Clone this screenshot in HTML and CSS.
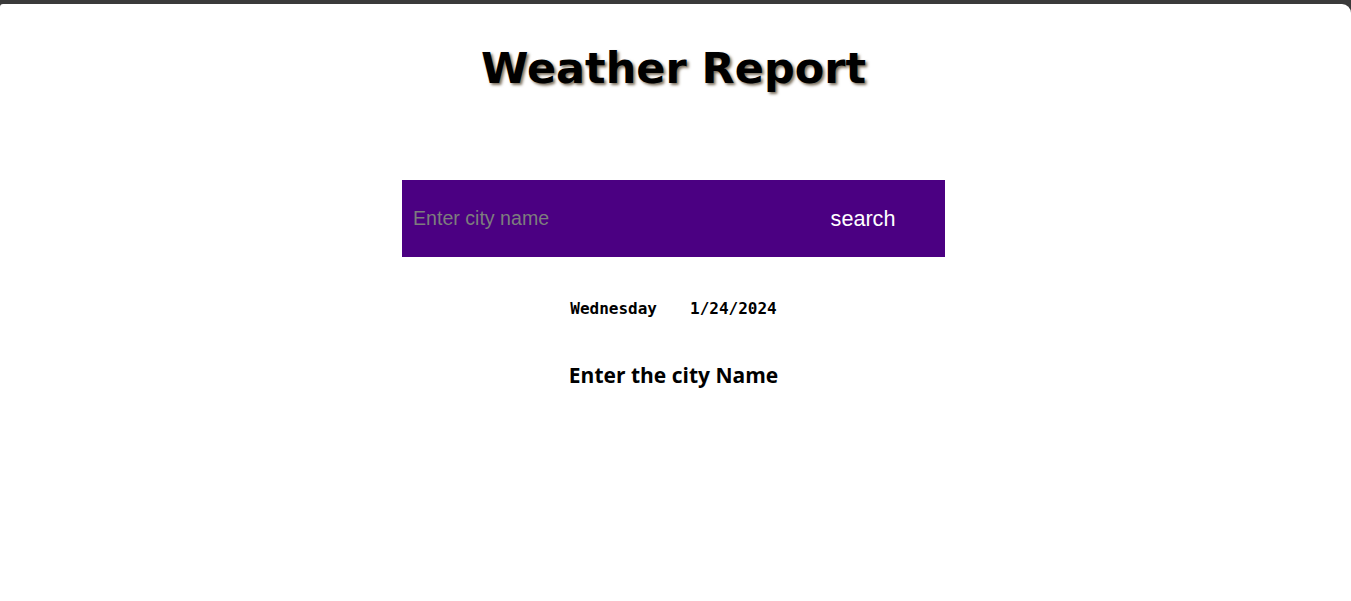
FILE: index.html
```html
<!DOCTYPE html>
<html lang="en">
<head>
<meta charset="utf-8">
<title>Weather Report</title>
<link rel="stylesheet" href="styles.css">
</head>
<body>
<div class="page">
  <h1 class="title">Weather Report</h1>
  <form class="search">
    <input class="search-input" type="text" placeholder="Enter city name">
    <button class="search-btn" type="button">search</button>
  </form>
  <div class="date-row">
    <span class="day">Wednesday</span>
    <span class="date">1/24/2024</span>
  </div>
  <h2 class="message">Enter the city Name</h2>
</div>
</body>
</html>
```
FILE: styles.css
```css
html, body {
  margin: 0;
  padding: 0;
  height: 100%;
}
body {
  background: #3a3a3a;
  padding-top: 4px;
  box-sizing: border-box;
}
.page {
  background: #ffffff;
  min-height: 100%;
  padding-right: 4px;
  box-sizing: border-box;
  border-radius: 3px 9px 0 0;
  display: flex;
  flex-direction: column;
  align-items: center;
}
.title {
  margin: 37px 0 0;
  font-family: "DejaVu Sans", Verdana, sans-serif;
  font-weight: bold;
  font-size: 43px;
  line-height: 54px;
  color: #000;
  text-shadow: 2px 2px 3px #7a6e5c;
}
.search {
  margin-top: 85px;
  width: 543px;
  height: 77px;
  background: #4b0082;
  display: flex;
  align-items: center;
}
.search-input {
  flex: 1;
  min-width: 0;
  height: 100%;
  background: transparent;
  border: none;
  outline: none;
  padding: 0 0 0 11px;
  font-family: "Liberation Sans", Arial, sans-serif;
  font-size: 19.6px;
  color: #fff;
}
.search-input::placeholder {
  color: #7d7d7d;
}
.search-btn {
  width: 132px;
  height: 100%;
  background: transparent;
  border: none;
  color: #fff;
  font-family: "Liberation Sans", Arial, sans-serif;
  font-size: 21.6px;
  padding: 0 32px 0 0;
  cursor: pointer;
}
.date-row {
  margin-top: 42px;
  display: flex;
  gap: 33px;
  font-family: "DejaVu Sans Mono", Consolas, monospace;
  font-weight: bold;
  font-size: 16px;
  line-height: 20px;
  color: #000;
}
.message {
  margin: 42px 0 0;
  font-family: "Open Sans", "Comic Sans MS", sans-serif;
  font-weight: bold;
  font-size: 21px;
  line-height: 28px;
  color: #000;
}
```
